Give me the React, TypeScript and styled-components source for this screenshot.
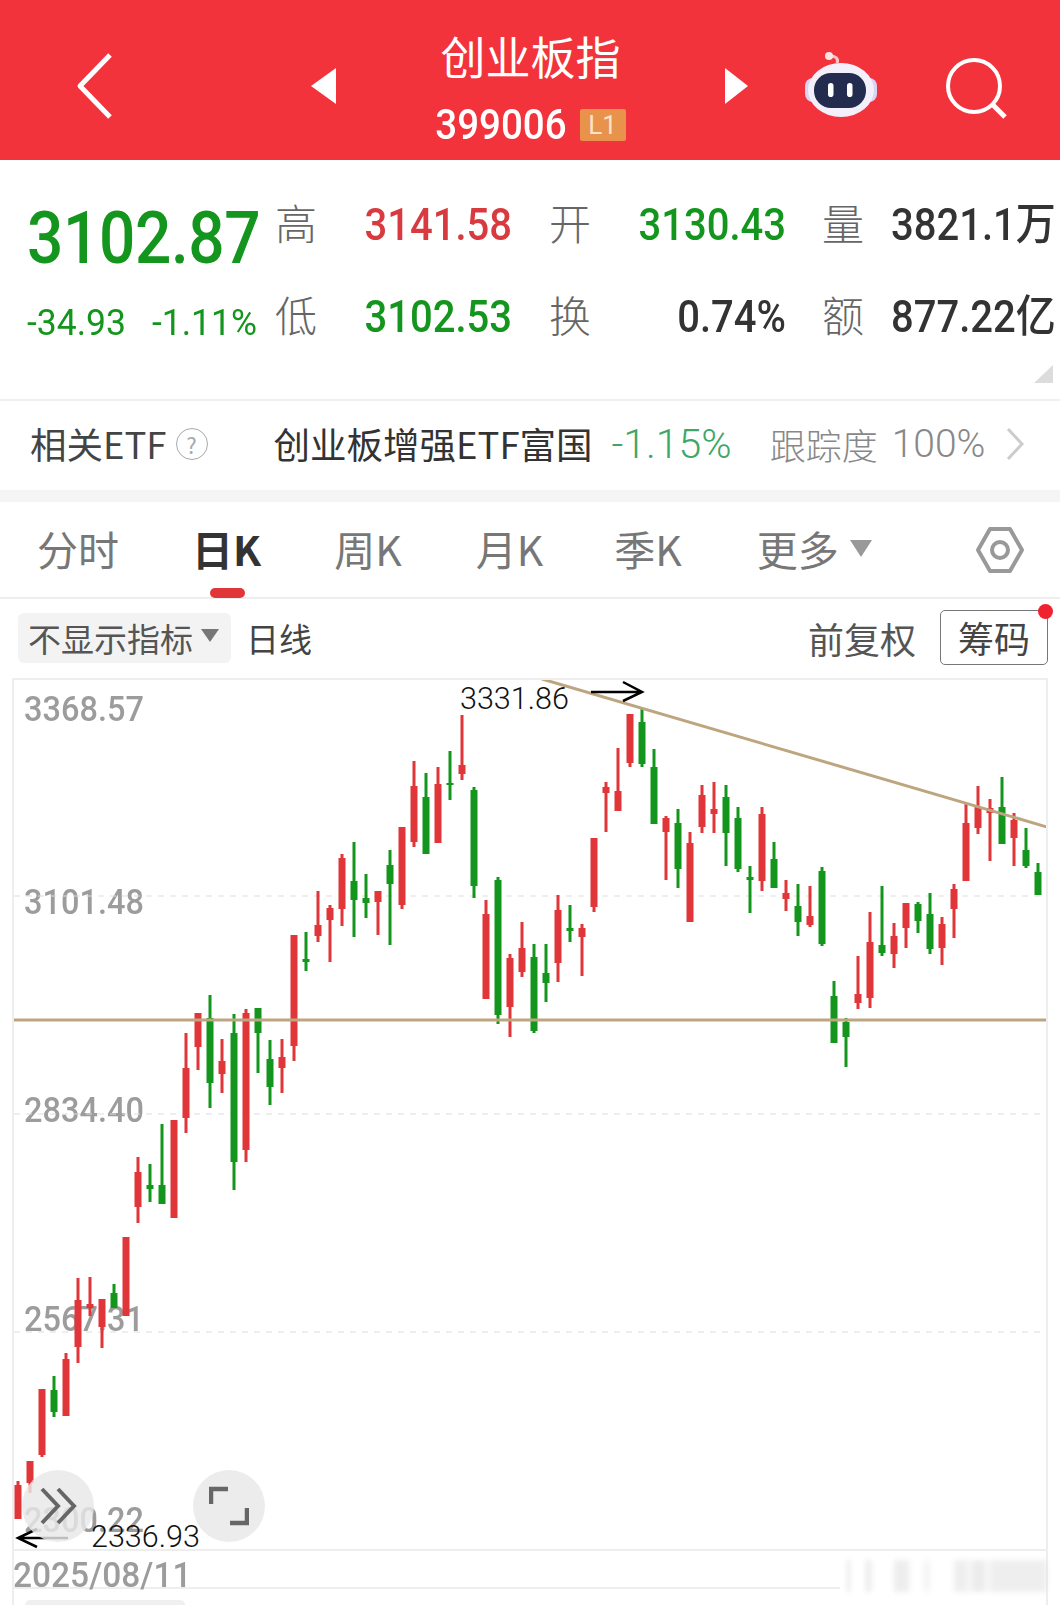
import styled, { createGlobalStyle } from 'styled-components';

const SANS = `Roboto, "Noto Sans CJK SC", sans-serif`;
const CJK = `"Noto Sans CJK SC", Roboto, sans-serif`;
const RED = '#e03539';
const GREEN = '#14951d';
const TAN = '#bda67f';

const GlobalStyle = createGlobalStyle`
  html, body {
    margin: 0;
    padding: 0;
    background: #fff;
  }
`;

const Page = styled.div`
  position: relative;
  width: 1060px;
  height: 1605px;
  overflow: hidden;
  background: #fff;
  font-family: ${CJK};
`;

const Header = styled.header`
  display: flex;
  align-items: center;
  height: 160px;
  box-sizing: border-box;
  padding: 12px 0 0 76px;
  background: #f2333c;
  color: #fff;
`;

const Prev = styled.svg`
  margin-left: 198px;
`;

const TitleBlock = styled.div`
  display: flex;
  flex-direction: column;
  align-items: center;
  align-self: flex-start;
  width: 389px;
  margin-top: 21px;
`;

const Title = styled.div`
  height: 46px;
  font-size: 45px;
  line-height: 46px;
`;

const CodeRow = styled.div`
  display: flex;
  align-items: center;
  gap: 13px;
  margin-top: 30px;
`;

const Code = styled.span`
  font-family: ${SANS};
  font-size: 38.5px;
  font-weight: 500;
  line-height: 32px;
  transform: scaleY(1.08);
`;

const LevelBadge = styled.span`
  width: 46px;
  height: 32px;
  border-radius: 2px;
  background: #e8924c;
  color: #fbe3c8;
  font-family: ${SANS};
  font-size: 26px;
  line-height: 32px;
  text-align: center;
`;

const Robot = styled.svg`
  margin-left: 51px;
`;

const Search = styled.svg`
  margin: 6px 0 0 61px;
`;

const Quote = styled.section`
  position: relative;
  display: flex;
  height: 239px;
  border-bottom: 2px solid #f0f0f0;
`;

const PriceBlock = styled.div`
  width: 249px;
  padding: 47px 0 0 27px;
`;

const Price = styled.div`
  color: ${GREEN};
  font-family: ${SANS};
  font-size: 64px;
  font-weight: 500;
  line-height: 64px;
  letter-spacing: -0.4px;
  white-space: nowrap;
  transform: scaleY(1.12);
`;

const Change = styled.div`
  display: flex;
  gap: 26px;
  margin-top: 31px;
  color: ${GREEN};
  font-family: ${SANS};
  font-size: 35.5px;
  line-height: 40px;
  white-space: nowrap;
  transform: scaleY(1.06);
`;

const Stats = styled.div`
  display: grid;
  grid-template-columns: 42px 195px 79px 195px 78px 196px;
  grid-auto-rows: 92px;
  align-items: center;
  padding-top: 18px;
`;

const StatLabel = styled.span`
  margin-top: -5px;
  color: #666;
  font-size: 42px;
  font-weight: 300;
  line-height: 46px;
  text-align: right;
`;

const StatValue = styled.span<{ $color: string; $left?: boolean }>`
  margin-top: 4px;
  padding-left: ${(p) => (p.$left ? '27px' : '0')};
  color: ${(p) => p.$color};
  font-family: ${SANS};
  font-size: 40px;
  font-weight: 500;
  line-height: 46px;
  text-align: ${(p) => (p.$left ? 'left' : 'right')};
  white-space: nowrap;
  transform: scaleY(1.1);
`;

const CornerMark = styled.div`
  position: absolute;
  right: 7px;
  bottom: 16px;
  width: 0;
  height: 0;
  border-left: 19px solid transparent;
  border-bottom: 18px solid #dcdcdc;
`;

const EtfRow = styled.section`
  display: flex;
  align-items: center;
  height: 89px;
  padding: 0 0 4px 30px;
  box-sizing: border-box;
  font-size: 36.5px;
  line-height: 44px;
  white-space: nowrap;
`;

const EtfHead = styled.span`
  color: #444;
`;

const Help = styled.span`
  width: 30px;
  height: 30px;
  margin: 0 66px 0 9px;
  border: 1px solid #aaa;
  border-radius: 50%;
  color: #aaa;
  font-size: 22px;
  line-height: 30px;
  text-align: center;
`;

const EtfName = styled.span`
  color: #333;
`;

const EtfChange = styled.span`
  margin-left: 19px;
  color: #3ea766;
  font-family: ${SANS};
  font-weight: 300;
  font-size: 41px;
`;

const EtfTrack = styled.span`
  margin-left: 38px;
  color: #888;
  font-size: 36px;
  font-weight: 300;
`;

const EtfPercent = styled.span`
  margin-left: 14px;
  color: #888;
  font-family: ${SANS};
  font-weight: 300;
  font-size: 39px;
`;

const EtfMore = styled.svg`
  margin-left: 21px;
`;

const Band = styled.div`
  height: 12px;
  background: #f5f5f5;
`;

const Tabs = styled.nav`
  position: relative;
  display: flex;
  align-items: center;
  height: 97px;
  padding-bottom: 3px;
  border-bottom: 2px solid #eee;
  box-sizing: border-box;
`;

const Tab = styled.span<{ $left: number; $active?: boolean }>`
  margin-left: ${(p) => p.$left}px;
  color: ${(p) => (p.$active ? '#333' : '#777')};
  font-size: 41px;
  font-weight: ${(p) => (p.$active ? 700 : 400)};
  line-height: 48px;
  white-space: nowrap;
`;

const TabMark = styled.div`
  position: absolute;
  left: 210px;
  bottom: -1px;
  width: 35px;
  height: 10px;
  border-radius: 5px;
  background: ${RED};
`;

const MoreCaret = styled.div`
  width: 0;
  height: 0;
  margin-left: 11px;
  border-top: 17px solid #999;
  border-left: 11px solid transparent;
  border-right: 11px solid transparent;
`;

const Gear = styled.svg`
  margin: 3px 0 0 104px;
`;

const Toolbar = styled.div`
  position: relative;
  display: flex;
  align-items: center;
  height: 79px;
  padding: 0 0 2px 18px;
  box-sizing: border-box;
`;

const IndicatorPill = styled.div`
  display: flex;
  align-items: center;
  width: 213px;
  height: 50px;
  padding-left: 10px;
  box-sizing: border-box;
  border-radius: 6px;
  background: #f3f3f3;
  color: #555;
  font-size: 33px;
  white-space: nowrap;
`;

const PillCaret = styled.div`
  width: 0;
  height: 0;
  margin-left: 8px;
  margin-top: -4px;
  border-top: 13px solid #777;
  border-left: 9px solid transparent;
  border-right: 9px solid transparent;
`;

const ToolText = styled.span`
  margin-left: 15px;
  color: #444;
  font-size: 33px;
  white-space: nowrap;
`;

const AdjustText = styled.span`
  margin-left: auto;
  color: #555;
  font-size: 36px;
  white-space: nowrap;
`;

const ChipButton = styled.div`
  position: relative;
  width: 108px;
  height: 55px;
  margin: 0 12px 0 24px;
  box-sizing: border-box;
  border: 1px solid #777;
  border-radius: 5px;
  color: #444;
  font-size: 36px;
  line-height: 53px;
  text-align: center;
`;

const RedDot = styled.div`
  position: absolute;
  top: -7px;
  right: -6px;
  width: 15px;
  height: 15px;
  border-radius: 50%;
  background: #f0222f;
`;

const Chart = styled.div`
  position: relative;
  width: 1036px;
  height: 873px;
  margin-left: 12px;
  box-sizing: border-box;
  border: 2px solid #eee;
`;

const Plot = styled.svg`
  position: absolute;
  left: 0;
  top: 0;
`;

const AxisLabel = styled.span<{ $top: number }>`
  position: absolute;
  left: 10px;
  top: ${(p) => p.$top}px;
  color: #9c9c9c;
  font-family: ${SANS};
  font-size: 32.5px;
  font-weight: 500;
  line-height: 36px;
  transform: scaleY(1.06);
`;

const Mark = styled.span<{ $left: number; $top: number }>`
  position: absolute;
  left: ${(p) => p.$left}px;
  top: ${(p) => p.$top}px;
  color: #111;
  font-family: ${SANS};
  font-size: 30.5px;
  font-weight: 300;
  line-height: 34px;
`;

const RoundButton = styled.div<{ $left: number }>`
  position: absolute;
  left: ${(p) => p.$left}px;
  top: 790px;
  display: flex;
  align-items: center;
  justify-content: center;
  width: 72px;
  height: 72px;
  border-radius: 50%;
  background: rgba(232, 232, 232, 0.82);
`;

const Footer = styled.div`
  position: relative;
  width: 1036px;
  height: 54px;
  margin-left: 12px;
  padding-top: 6px;
  box-sizing: border-box;
  border-left: 2px solid #eee;
  border-right: 2px solid #eee;
`;

const DateText = styled.div`
  height: 30px;
  margin-left: -1px;
  color: #9c9c9c;
  font-family: ${SANS};
  font-size: 33.5px;
  font-weight: 500;
  line-height: 36px;
  transform: scaleY(1.04);
`;

const FooterLine = styled.div`
  width: 826px;
  height: 2px;
  background: #eee;
`;

const Watermark = styled.div`
  position: absolute;
  left: 833px;
  top: 9px;
  width: 200px;
  height: 32px;
  background: linear-gradient(
    90deg,
    #d8d8d8 0 2px,
    #fff 4px 18px,
    #dcdcdc 20px 22px,
    #fff 26px 46px,
    #e2e2e2 48px 60px,
    #fff 64px 76px,
    #ececec 78px 81px,
    #fff 84px 106px,
    #e4e4e4 108px 118px,
    #f4f4f4 122px,
    #e0e0e0 128px 136px,
    #f6f6f6 140px,
    #e4e4e4 146px 200px
  );
  filter: blur(2.5px);
  opacity: 0.6;
`;

const FooterPill = styled.div`
  position: absolute;
  left: 11px;
  top: 49px;
  width: 160px;
  height: 10px;
  border-radius: 6px;
  background: #f0f0f0;
`;

type Candle = [string, number, number, number, number];

// colour, wick top, body top, body bottom, wick bottom (page y), 12px apart from x=18
const candles: Candle[] = [
  ['r', 1481, 1485, 1519, 1519],
  ['r', 1461, 1461, 1483, 1493],
  ['r', 1389, 1389, 1455, 1457],
  ['g', 1376, 1390, 1412, 1417],
  ['r', 1353, 1359, 1416, 1416],
  ['r', 1278, 1300, 1347, 1363],
  ['r', 1277, 1304, 1308, 1316],
  ['r', 1299, 1299, 1327, 1348],
  ['g', 1284, 1293, 1308, 1308],
  ['r', 1237, 1237, 1316, 1316],
  ['r', 1157, 1172, 1207, 1223],
  ['g', 1164, 1185, 1189, 1202],
  ['g', 1124, 1185, 1204, 1204],
  ['r', 1120, 1120, 1218, 1218],
  ['r', 1033, 1068, 1118, 1133],
  ['r', 1013, 1013, 1047, 1070],
  ['g', 995, 1018, 1083, 1108],
  ['r', 1039, 1061, 1074, 1093],
  ['g', 1014, 1033, 1162, 1190],
  ['r', 1009, 1013, 1150, 1162],
  ['g', 1008, 1008, 1033, 1073],
  ['g', 1040, 1059, 1087, 1105],
  ['r', 1039, 1057, 1068, 1093],
  ['r', 935, 935, 1046, 1061],
  ['g', 932, 959, 962, 971],
  ['r', 891, 925, 936, 942],
  ['r', 905, 908, 920, 962],
  ['r', 854, 858, 909, 926],
  ['g', 842, 881, 900, 937],
  ['g', 874, 898, 903, 918],
  ['r', 891, 891, 902, 935],
  ['g', 850, 865, 884, 945],
  ['r', 827, 827, 905, 909],
  ['r', 761, 786, 842, 847],
  ['g', 773, 797, 854, 854],
  ['r', 767, 784, 843, 843],
  ['g', 751, 783, 785, 800],
  ['r', 715, 765, 774, 780],
  ['g', 787, 790, 886, 898],
  ['r', 900, 914, 999, 999],
  ['g', 877, 880, 1015, 1024],
  ['r', 954, 958, 1007, 1037],
  ['r', 922, 948, 972, 977],
  ['g', 944, 957, 1031, 1033],
  ['g', 944, 973, 983, 1002],
  ['r', 895, 910, 963, 982],
  ['g', 905, 928, 931, 942],
  ['r', 924, 928, 937, 976],
  ['r', 838, 838, 907, 912],
  ['r', 782, 787, 793, 832],
  ['r', 748, 791, 811, 811],
  ['r', 714, 714, 763, 767],
  ['g', 709, 722, 764, 767],
  ['g', 749, 767, 824, 824],
  ['r', 816, 818, 832, 880],
  ['g', 809, 823, 869, 888],
  ['r', 832, 843, 922, 922],
  ['r', 785, 795, 827, 833],
  ['r', 782, 809, 814, 833],
  ['g', 785, 797, 833, 866],
  ['g', 807, 818, 869, 872],
  ['g', 866, 877, 880, 913],
  ['r', 807, 814, 881, 891],
  ['g', 842, 859, 888, 888],
  ['r', 880, 893, 899, 911],
  ['g', 884, 906, 922, 936],
  ['r', 886, 916, 925, 927],
  ['g', 867, 871, 944, 946],
  ['g', 981, 996, 1043, 1043],
  ['g', 1018, 1022, 1037, 1067],
  ['r', 956, 994, 1003, 1009],
  ['r', 912, 942, 998, 1008],
  ['g', 886, 945, 953, 956],
  ['r', 923, 936, 954, 968],
  ['r', 903, 903, 928, 948],
  ['g', 902, 904, 921, 933],
  ['g', 893, 914, 949, 954],
  ['r', 917, 924, 948, 965],
  ['r', 884, 889, 909, 938],
  ['r', 804, 823, 881, 881],
  ['r', 786, 807, 828, 834],
  ['r', 799, 808, 813, 861],
  ['g', 777, 807, 844, 844],
  ['r', 813, 820, 838, 866],
  ['g', 828, 850, 866, 868],
  ['g', 863, 872, 895, 895],
];

const gridLines = [896, 1114, 1332];

const axisLabels = [
  { text: '3368.57', top: 11 },
  { text: '3101.48', top: 204 },
  { text: '2834.40', top: 412 },
  { text: '2567.31', top: 621 },
  { text: '2300.22', top: 822 },
];

function App() {
  return (
    <Page>
      <GlobalStyle />
      <Header>
        <svg width="37" height="66" viewBox="0 0 37 66">
          <path d="M34 2 L4 33 L34 64" fill="none" stroke="#fff" strokeWidth="5" strokeLinejoin="round" />
        </svg>
        <Prev width="25" height="36" viewBox="0 0 25 36">
          <path d="M25 0 V36 L0 18 Z" fill="#fff" />
        </Prev>
        <TitleBlock>
          <Title>创业板指</Title>
          <CodeRow>
            <Code>399006</Code>
            <LevelBadge>L1</LevelBadge>
          </CodeRow>
        </TitleBlock>
        <svg width="23" height="36" viewBox="0 0 23 36">
          <path d="M0 0 V36 L23 18 Z" fill="#fff" />
        </svg>
        <Robot width="84" height="72" viewBox="0 0 84 72">
          <path d="M38 13 C40 8 36 6 31 6" fill="none" stroke="#f4c6cc" strokeWidth="3" />
          <circle cx="30" cy="6" r="4" fill="#fbe4e6" />
          <rect x="6" y="28" width="72" height="24" rx="8" fill="#d9d4f2" />
          <ellipse cx="42" cy="40" rx="33" ry="27" fill="#f3f0fb" />
          <rect x="15" y="23" width="52" height="35" rx="17" fill="#232c4f" />
          <rect x="29" y="33" width="5.5" height="14" rx="2.8" fill="#fff" />
          <rect x="48" y="33" width="5.5" height="14" rx="2.8" fill="#fff" />
        </Robot>
        <Search width="66" height="66" viewBox="0 0 66 66">
          <circle cx="30" cy="30" r="26" fill="none" stroke="#fff" strokeWidth="4" />
          <path d="M49 49 L61 61" stroke="#fff" strokeWidth="5" />
        </Search>
      </Header>

      <Quote>
        <PriceBlock>
          <Price>3102.87</Price>
          <Change>
            <span>-34.93</span>
            <span>-1.11%</span>
          </Change>
        </PriceBlock>
        <Stats>
          <StatLabel>高</StatLabel>
          <StatValue $color="#d93a40">3141.58</StatValue>
          <StatLabel>开</StatLabel>
          <StatValue $color={GREEN}>3130.43</StatValue>
          <StatLabel>量</StatLabel>
          <StatValue $color="#333" $left>3821.1万</StatValue>
          <StatLabel>低</StatLabel>
          <StatValue $color={GREEN}>3102.53</StatValue>
          <StatLabel>换</StatLabel>
          <StatValue $color="#333">0.74%</StatValue>
          <StatLabel>额</StatLabel>
          <StatValue $color="#333" $left>877.22亿</StatValue>
        </Stats>
        <CornerMark />
      </Quote>

      <EtfRow>
        <EtfHead>相关ETF</EtfHead>
        <Help>?</Help>
        <EtfName>创业板增强ETF富国</EtfName>
        <EtfChange>-1.15%</EtfChange>
        <EtfTrack>跟踪度</EtfTrack>
        <EtfPercent>100%</EtfPercent>
        <EtfMore width="18" height="32" viewBox="0 0 18 32">
          <path d="M2 1 L16 16 L2 31" fill="none" stroke="#ccc" strokeWidth="3" />
        </EtfMore>
      </EtfRow>
      <Band />

      <Tabs>
        <Tab $left={37}>分时</Tab>
        <Tab $left={73} $active>日K</Tab>
        <Tab $left={73}>周K</Tab>
        <Tab $left={74}>月K</Tab>
        <Tab $left={71}>季K</Tab>
        <Tab $left={75}>更多</Tab>
        <MoreCaret />
        <Gear width="48" height="48" viewBox="0 0 48 48">
          <path d="M14 3 H34 L46 24 L34 45 H14 L2 24 Z" fill="none" stroke="#999" strokeWidth="4" strokeLinejoin="round" />
          <circle cx="24" cy="24" r="8" fill="none" stroke="#999" strokeWidth="4" />
        </Gear>
        <TabMark />
      </Tabs>

      <Toolbar>
        <IndicatorPill>
          不显示指标
          <PillCaret />
        </IndicatorPill>
        <ToolText>日线</ToolText>
        <AdjustText>前复权</AdjustText>
        <ChipButton>
          筹码
          <RedDot />
        </ChipButton>
      </Toolbar>

      <Chart>
        {axisLabels.map((label) => (
          <AxisLabel key={label.text} $top={label.top}>{label.text}</AxisLabel>
        ))}
        <Plot width="1032" height="869" viewBox="14 680 1032 869">
          {gridLines.map((y) => (
            <line key={y} x1="14" x2="1046" y1={y} y2={y} stroke="#ddd" strokeDasharray="6 6" />
          ))}
          {candles.map(([color, wickTop, bodyTop, bodyBottom, wickBottom], i) => {
            const x = 18 + i * 12;
            const fill = color === 'r' ? RED : GREEN;
            return (
              <g key={x} fill={fill}>
                <rect x={x - 1.5} y={wickTop} width="3" height={wickBottom - wickTop} />
                <rect x={x - 3.5} y={bodyTop} width="7" height={bodyBottom - bodyTop} />
              </g>
            );
          })}
          <line x1="14" x2="1046" y1="1020" y2="1020" stroke={TAN} strokeWidth="3" />
          <line x1="542" y1="679" x2="1047" y2="827" stroke={TAN} strokeWidth="3" />
          <path d="M591 692 H642 M623 682 L642 692 L623 701" fill="none" stroke="#000" strokeWidth="2.5" />
          <path d="M68 1538 H18 M37 1529 L18 1538 L37 1547" fill="none" stroke="#000" strokeWidth="2.5" />
        </Plot>
        <Mark $left={446} $top={2}>3331.86</Mark>
        <Mark $left={77} $top={840}>2336.93</Mark>
        <RoundButton $left={8}>
          <svg width="40" height="40" viewBox="0 0 40 40">
            <path d="M4 3 L20 20 L4 37 M20 3 L36 20 L20 37" fill="none" stroke="#666" strokeWidth="4" />
          </svg>
        </RoundButton>
        <RoundButton $left={179}>
          <svg width="40" height="40" viewBox="0 0 40 40">
            <path d="M2 18 V3 H19 M21 37 H38 V22" fill="none" stroke="#666" strokeWidth="4.5" />
          </svg>
        </RoundButton>
      </Chart>

      <Footer>
        <DateText>2025/08/11</DateText>
        <FooterLine />
        <Watermark />
        <FooterPill />
      </Footer>
    </Page>
  );
}

export default App;
